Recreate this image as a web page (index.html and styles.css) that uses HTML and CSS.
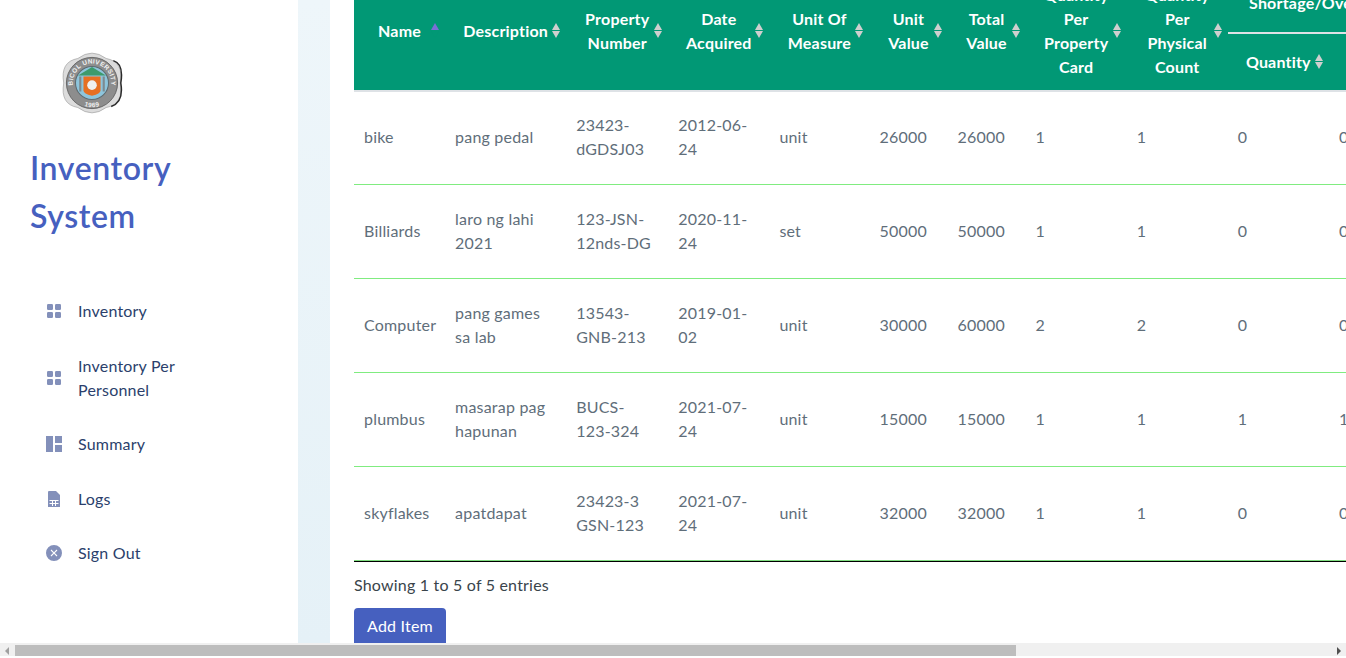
FILE: index.html
```html
<!DOCTYPE html>
<html lang="en">
<head>
    <meta charset="UTF-8">
    <title>Inventory System</title>
    <link rel="stylesheet" href="styles.css">
</head>
<body>
    <div class="page">
        <aside class="sidebar">
            <svg class="logo" viewBox="0 0 60 60" width="64" height="64">
                <path d="M16.75 7 Q30 -3 43.25 7 Q60 10 56.5 30 Q60 50 43.25 53 Q30 63 16.75 53 Q0 50 3.5 30 Q0 10 16.75 7 Z" fill="#dcdcdc" stroke="#9a9a9a" stroke-width="0.6"/>
                <path d="M50 9 Q60 12 57 30 Q60 48 48 52" fill="none" stroke="#2a2a2a" stroke-width="1.4"/>
                <circle cx="30" cy="30" r="24" fill="#8d8d8d" stroke="#5c5c5c" stroke-width="0.8"/>
                <circle cx="30" cy="30" r="15.5" fill="#8ec5dc" stroke="#5f6b70" stroke-width="1"/>
                <path d="M17 23 L30 15 L43 23 Z" fill="#3c9a6c"/>
                <path d="M19 24 V38 M41 24 V38" stroke="#7d8a90" stroke-width="2"/>
                <path d="M22 24 H38 V37 Q38 40 30 42 Q22 40 22 37 Z" fill="#e66f22"/>
                <circle cx="30" cy="32" r="4.5" fill="#efefef"/>
                <path id="logo-top" d="M12.5 34 A18 18 0 1 1 47.5 34" fill="none"/>
                <text class="logo-text"><textPath href="#logo-top" startOffset="50%" text-anchor="middle">BICOL UNIVERSITY</textPath></text>
                <path id="logo-bottom" d="M12.5 44.5 A22.7 22.7 0 0 0 47.5 44.5" fill="none"/>
                <text class="logo-text"><textPath href="#logo-bottom" startOffset="50%" text-anchor="middle">1969</textPath></text>
            </svg>
            <h1 class="brand">Inventory System</h1>
            <nav>
                <ul class="menu">
                    <li><svg class="ico" viewBox="0 0 16 16"><rect x="1" y="1" width="6" height="6" rx="1.2"/><rect x="9" y="1" width="6" height="6" rx="1.2"/><rect x="1" y="9" width="6" height="6" rx="1.2"/><rect x="9" y="9" width="6" height="6" rx="1.2"/></svg><a href="#">Inventory</a></li>
                    <li><svg class="ico" viewBox="0 0 16 16"><rect x="1" y="1" width="6" height="6" rx="1.2"/><rect x="9" y="1" width="6" height="6" rx="1.2"/><rect x="1" y="9" width="6" height="6" rx="1.2"/><rect x="9" y="9" width="6" height="6" rx="1.2"/></svg><a href="#">Inventory Per Personnel</a></li>
                    <li><svg class="ico" viewBox="0 0 16 16"><rect x="0" y="0" width="7" height="16"/><rect x="9" y="0" width="7" height="7"/><rect x="9" y="9" width="7" height="7"/></svg><a href="#">Summary</a></li>
                    <li><svg class="ico" viewBox="0 0 16 16"><path fill-rule="evenodd" d="M3 0 H10 L14 4 V16 H2 V1 Q2 0 3 0 Z M3.5 9 V10 H6 V12 H3.5 V13 H6 V15 H7 V13 H9 V15 H10 V13 H12.5 V12 H10 V10 H12.5 V9 Z M7 10 H9 V12 H7 Z"/></svg><a href="#">Logs</a></li>
                    <li><svg class="ico" viewBox="0 0 16 16"><path fill-rule="evenodd" d="M8 0 A8 8 0 1 1 8 16 A8 8 0 1 1 8 0 Z M5.4 4.6 L4.6 5.4 L7.2 8 L4.6 10.6 L5.4 11.4 L8 8.8 L10.6 11.4 L11.4 10.6 L8.8 8 L11.4 5.4 L10.6 4.6 L8 7.2 Z"/></svg><a href="#">Sign Out</a></li>
                </ul>
            </nav>
        </aside>
        <div class="gutter"></div>
        <main class="content">
            <table class="items">
                <colgroup>
                    <col class="c-name"><col class="c-desc"><col class="c-prop"><col class="c-date"><col class="c-unit"><col class="c-val"><col class="c-val"><col class="c-qty"><col class="c-qty"><col class="c-qty"><col class="c-last">
                </colgroup>
                <thead>
                    <tr>
                        <th rowspan="2"><div class="th-in">Name <span class="sort asc"></span></div></th>
                        <th rowspan="2"><div class="th-in">Description <span class="sort"></span></div></th>
                        <th rowspan="2"><div class="th-in">Property Number <span class="sort"></span></div></th>
                        <th rowspan="2"><div class="th-in">Date Acquired <span class="sort"></span></div></th>
                        <th rowspan="2"><div class="th-in">Unit Of Measure <span class="sort"></span></div></th>
                        <th rowspan="2"><div class="th-in">Unit Value <span class="sort"></span></div></th>
                        <th rowspan="2"><div class="th-in">Total Value <span class="sort"></span></div></th>
                        <th rowspan="2"><div class="th-in">Quantity Per Property Card <span class="sort"></span></div></th>
                        <th rowspan="2"><div class="th-in">Quantity Per Physical Count <span class="sort"></span></div></th>
                        <th colspan="2" class="group">Shortage/Overage</th>
                    </tr>
                    <tr>
                        <th class="sub"><div class="th-in">Quantity <span class="sort"></span></div></th>
                        <th class="sub"><div class="th-in">Value <span class="sort"></span></div></th>
                    </tr>
                </thead>
                <tbody>
                    <tr><td>bike</td><td>pang pedal</td><td>23423-dGDSJ03</td><td>2012-06-24</td><td>unit</td><td>26000</td><td>26000</td><td>1</td><td>1</td><td>0</td><td>0</td></tr>
                    <tr><td>Billiards</td><td>laro ng lahi 2021</td><td>123-JSN-12nds-DG</td><td>2020-11-24</td><td>set</td><td>50000</td><td>50000</td><td>1</td><td>1</td><td>0</td><td>0</td></tr>
                    <tr><td>Computer</td><td>pang games sa lab</td><td>13543-GNB-213</td><td>2019-01-02</td><td>unit</td><td>30000</td><td>60000</td><td>2</td><td>2</td><td>0</td><td>0</td></tr>
                    <tr><td>plumbus</td><td>masarap pag hapunan</td><td>BUCS-123-324</td><td>2021-07-24</td><td>unit</td><td>15000</td><td>15000</td><td>1</td><td>1</td><td>1</td><td>15000</td></tr>
                    <tr><td>skyflakes</td><td>apatdapat</td><td>23423-3 GSN-123</td><td>2021-07-24</td><td>unit</td><td>32000</td><td>32000</td><td>1</td><td>1</td><td>0</td><td>0</td></tr>
                </tbody>
            </table>
            <p class="info">Showing 1 to 5 of 5 entries</p>
            <button class="add-btn">Add Item</button>
        </main>
    </div>
    <div class="hscroll">
        <span class="arrow left"></span>
        <div class="track"><div class="thumb"></div></div>
        <span class="arrow right"></span>
    </div>
</body>
</html>
```

FILE: styles.css
```css
html, body {
    margin: 0;
    padding: 0;
    height: 658px;
    overflow: hidden;
    background-color: #fff;
}

body {
    font-family: "Lato", "Open Sans", sans-serif;
    font-size: 16px;
    line-height: 24px;
    letter-spacing: 0.2px;
    color: #5f6e7a;
}

.page {
    display: flex;
    height: 643px;
    overflow: hidden;
}

.sidebar {
    width: 298px;
    flex: none;
    padding: 51px 0 0 30px;
    box-sizing: border-box;
}

.logo {
    display: block;
    margin-left: 30px;
}

.logo-text {
    font-family: "Liberation Sans", sans-serif;
    font-size: 6px;
    font-weight: bold;
    letter-spacing: 0.3px;
    fill: #f2f2f2;
}

.brand {
    margin: 29px 0 0;
    width: 180px;
    font-size: 32px;
    line-height: 48px;
    font-weight: 600;
    letter-spacing: 0.6px;
    color: #4660bf;
}

.menu {
    list-style: none;
    margin: 44px 0 0;
    padding: 0;
}

.menu li {
    display: flex;
    align-items: center;
    width: 160px;
    padding: 15.25px 0 15.25px 16px;
}

.menu a {
    color: #2b3f6c;
    text-decoration: none;
}

.ico {
    width: 16px;
    height: 16px;
    flex: none;
    margin-right: 16px;
    fill: #8390ba;
}

.gutter {
    width: 32px;
    flex: none;
    background: linear-gradient(#eef6fa, #e5f1f7);
}

.content {
    flex: 1;
    min-width: 0;
    padding-left: 24px;
    overflow: hidden;
}

.items {
    table-layout: fixed;
    border-collapse: separate;
    border-spacing: 0;
    width: 1051px;
    margin-top: -27px;
}

.c-name { width: 91px; }
.c-desc { width: 121px; }
.c-prop { width: 102px; }
.c-date { width: 101px; }
.c-unit { width: 100px; }
.c-val { width: 78px; }
.c-qty { width: 101px; }
.c-last { width: 76px; }

.items th {
    background-color: #019875;
    color: #fff;
    font-weight: 700;
    padding: 10px 10px 11px;
    border-bottom: 2px solid #dee2e6;
    text-align: center;
    vertical-align: middle;
}

.th-in {
    position: relative;
}

.items th.group {
    height: 39px;
    padding-bottom: 10px;
    white-space: nowrap;
}

.items td {
    height: 73px;
    padding: 9px 10px 11px;
    border-bottom: 1px solid #80ec80;
    vertical-align: middle;
}

.items tbody tr:first-child td {
    height: 72px;
}

.items tbody tr:last-child td {
    height: 74px;
    border-bottom: 1px solid #000;
    box-shadow: inset 0 -1px 0 #7fdc7f;
}

.sort {
    position: absolute;
    right: -5px;
    top: 50%;
    width: 9px;
    height: 15px;
    margin-top: -8px;
}

.sort::before,
.sort::after {
    content: "";
    position: absolute;
    left: 0;
    border-left: 4.5px solid transparent;
    border-right: 4.5px solid transparent;
}

.sort::before {
    top: 0;
    border-bottom: 7px solid #cfcfcf;
}

.sort::after {
    bottom: 0;
    border-top: 7px solid #cfcfcf;
}

.sort.asc::before {
    border-bottom-color: #7b6fd6;
}

.sort.asc::after {
    border-top-color: #019875;
}

.info {
    margin: 11px 0 0;
    color: #3a444b;
}

.add-btn {
    display: block;
    margin-top: 11px;
    width: 92px;
    height: 38px;
    padding: 0 0 2px;
    font: inherit;
    letter-spacing: inherit;
    color: #fff;
    background-color: #4660bf;
    border: none;
    border-radius: 4px;
}

.hscroll {
    display: flex;
    align-items: stretch;
    height: 13px;
    background-color: #f0f0f0;
}

.track {
    flex: 1;
    padding-top: 2px;
}

.thumb {
    width: 1001px;
    height: 11px;
    background-color: #bdbdbd;
}

.arrow {
    width: 15px;
    flex: none;
    position: relative;
}

.arrow::after {
    content: "";
    position: absolute;
    top: 4px;
    border-top: 4px solid transparent;
    border-bottom: 4px solid transparent;
}

.arrow.left::after {
    left: 5px;
    border-right: 4px solid #a0a0a0;
}

.arrow.right::after {
    left: 6px;
    border-left: 4px solid #505050;
}
```
